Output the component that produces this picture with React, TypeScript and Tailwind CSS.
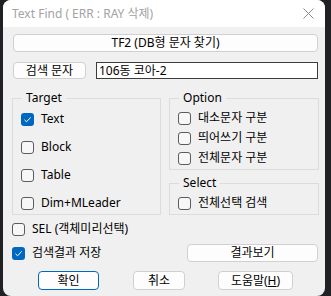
import React from "react";

const font = { fontFamily: '"Noto Sans", "Noto Sans CJK KR", sans-serif' };

function CheckBox({ checked }: { checked?: boolean }) {
    if (checked) {
        return (
            <span className="w-[13px] h-[13px] rounded-[3px] bg-[#0067c0] flex items-center justify-center shrink-0">
                <svg width="9" height="9" viewBox="0 0 9 9">
                    <path d="M1.5 4.8 L3.6 6.8 L7.6 2.4" stroke="#fff" strokeWidth="1" fill="none" />
                </svg>
            </span>
        );
    }
    return <span className="w-[13px] h-[13px] rounded-[3px] border border-[#5c5c5c] bg-[#f7f7f7] shrink-0" />;
}

function Check({ label, checked, h }: { label: string; checked?: boolean; h: string }) {
    return (
        <div className={`flex items-center gap-[7px] ${h}`}>
            <CheckBox checked={checked} />
            <span className="text-[12px] text-black leading-none">{label}</span>
        </div>
    );
}

function Btn({ children, className = "", primary = false }: { children: React.ReactNode; className?: string; primary?: boolean }) {
    return (
        <button
            className={`flex items-center justify-center bg-[#fdfdfd] rounded-[4px] text-[12px] text-black leading-none ${
                primary ? "border-[1.5px] border-[#0067c0]" : "border border-[#d0d0d0]"
            } ${className}`}>
            {children}
        </button>
    );
}

export default function App() {
    return (
        <div className="w-[331px] h-[296px] bg-[#1f2125] flex" style={font}>
            <div className="ml-[3px] w-[322px] h-[296px] rounded-[8px] bg-[#f0f0f0] overflow-hidden flex flex-col">
                <div className="h-[27px] bg-white flex items-center pl-[9px] pr-[9px]">
                    <span className="text-[12px] text-[#a3a3a3]">Text Find ( ERR : RAY 삭제)</span>
                    <svg className="ml-auto mr-[2px]" width="11" height="11" viewBox="0 0 11 11">
                        <path d="M0.5 0.5 L10.5 10.5 M10.5 0.5 L0.5 10.5" stroke="#8a8a8a" strokeWidth="1" />
                    </svg>
                </div>

                <div className="flex flex-col pl-[9px] pr-[6px]">
                    <Btn className="mx-[1px] mt-[7px] h-[18px]">TF2 (DB형 문자 찾기)</Btn>

                    <div className="flex items-center mt-[10px] ml-[1px]">
                        <Btn className="w-[73px] h-[17px]">검색 문자</Btn>
                        <div className="ml-[10px] w-[222px] h-[17px] border border-[#3c3c3c] bg-white flex items-center px-[2px] text-[12px] text-black leading-none">
                            106동 코아-2
                        </div>
                    </div>

                    <div className="flex gap-[8px] mt-[12px]">
                        <fieldset className="w-[150px] h-[124px] border border-[#dcdcdc] pl-[8px]">
                            <legend className="ml-[1px] px-[4px] text-[12px] leading-[14px] text-black">Target</legend>
                            <Check label="Text" checked h="h-[28px]" />
                            <Check label="Block" h="h-[28px]" />
                            <Check label="Table" h="h-[28px]" />
                            <Check label="Dim+MLeader" h="h-[28px]" />
                        </fieldset>
                        <div className="flex flex-col w-[151px]">
                            <fieldset className="h-[79px] border border-[#dcdcdc] pl-[8px] pt-[3px]">
                                <legend className="ml-[1px] px-[4px] text-[12px] leading-[14px] text-black">Option</legend>
                                <Check label="대소문자 구분" h="h-[20px]" />
                                <Check label="띄어쓰기 구분" h="h-[20px]" />
                                <Check label="전체문자 구분" h="h-[20px]" />
                            </fieldset>
                            <fieldset className="mt-[6px] h-[39px] border border-[#dcdcdc] pl-[8px] pt-[3px]">
                                <legend className="ml-[1px] px-[4px] text-[12px] leading-[14px] text-black">Select</legend>
                                <Check label="전체선택 검색" h="h-[20px]" />
                            </fieldset>
                        </div>
                    </div>

                    <div className="mt-[4px]">
                        <Check label="SEL (객체미리선택)" h="h-[20px]" />
                    </div>
                    <div className="mt-[3px] h-[22px] flex items-center">
                        <Check label="검색결과 저장" checked h="h-[22px]" />
                        <Btn className="ml-auto mr-[1px] w-[131px] h-[18px]">결과보기</Btn>
                    </div>

                    <div className="flex mt-[7px] ml-[26px]">
                        <Btn primary className="w-[61px] h-[19px]">확인</Btn>
                        <Btn className="ml-[34px] w-[52px] h-[19px]">취소</Btn>
                        <Btn className="ml-[33px] w-[75px] h-[19px]">
                            도움말(<span className="underline">H</span>)
                        </Btn>
                    </div>
                </div>
            </div>
        </div>
    );
}
